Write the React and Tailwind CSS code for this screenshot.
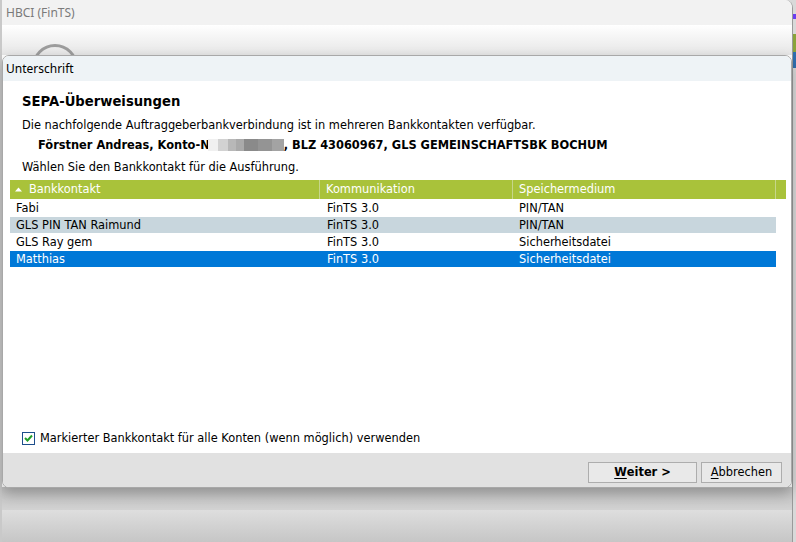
import React from "react";

const rows = [
  { name: "Fabi", komm: "FinTS 3.0", medium: "PIN/TAN", tone: "plain" },
  { name: "GLS PIN TAN Raimund", komm: "FinTS 3.0", medium: "PIN/TAN", tone: "alt" },
  { name: "GLS Ray gem", komm: "FinTS 3.0", medium: "Sicherheitsdatei", tone: "plain" },
  { name: "Matthias", komm: "FinTS 3.0", medium: "Sicherheitsdatei", tone: "selected" },
];

const rowTone = {
  plain: "bg-white text-black",
  alt: "bg-[#c8d6dd] text-black",
  selected: "bg-[#0078d7] text-white",
};

export default function App() {
  return (
    <div className="relative h-[542px] w-[796px] overflow-hidden bg-[#d9d9d9] font-['Noto_Sans',sans-serif]">
      {/* background window */}
      <div className="flex h-full w-[793px] flex-col overflow-hidden rounded-tr-[8px] border-l-2 border-r border-[#9a9a9a] border-l-[#c9c9c9] bg-white">
        <div className="flex h-[25px] items-center bg-[#f2f2f2] pl-[4px] text-[12px] text-[#7a7a7a]">
          HBCI (FinTS)
        </div>
        <div className="relative h-[30px] bg-gradient-to-b from-white to-[#e6e6e6]">
          <div className="absolute left-[30px] top-[19px] h-[46px] w-[46px] rounded-full border-[3px] border-[#9c9c9c]" />
        </div>
        <div className="flex-1 bg-white" />
        <div className="h-[23px] bg-gradient-to-b from-[#c2c2c2] to-[#d2d2d2]" />
        <div className="h-[32px] bg-gradient-to-b from-[#dedede] to-[#c6c6c6]" />
      </div>

      {/* right desktop strip accents */}
      <div className="absolute right-0 top-[14px] h-[5px] w-[3px] bg-[#6a3cf0]" />
      <div className="absolute right-0 top-[34px] h-[18px] w-[3px] bg-[#8aa33a]" />
      <div className="absolute right-0 top-[52px] h-[16px] w-[3px] bg-[#2f6fb0]" />

      {/* dialog */}
      <div className="absolute left-[2px] top-[55px] flex h-[433px] w-[790px] flex-col overflow-hidden rounded-[7px] border border-[#a8a8a8] bg-white shadow-[0_6px_14px_rgba(0,0,0,0.25)]">
        <div className="flex h-[25px] shrink-0 items-center bg-[#eef3f6] pl-[3px] text-[12px] text-black">
          Unterschrift
        </div>

        <div className="flex flex-1 flex-col font-['DejaVu_Sans',sans-serif] text-[11.4px] text-black">
          <div className="pl-[19px] pt-[13px] text-[13.2px] font-bold leading-[16px]">
            SEPA-Überweisungen
          </div>
          <div className="mt-[8px] pl-[19px] leading-[14px]">
            Die nachfolgende Auftraggeberbankverbindung ist in mehreren Bankkontakten verfügbar.
          </div>
          <div className="mt-[6px] flex items-center pl-[35px] font-bold leading-[14px]">
            <span>Förstner Andreas, Konto-N</span>
            <span className="ml-[-2px] flex h-[12px] w-[76px]">
              <span className="w-[10px] bg-[#f0f0f0]" />
              <span className="w-[10px] bg-[#d2d2d2]" />
              <span className="w-[8px] bg-[#b8b8b8]" />
              <span className="w-[8px] bg-[#aaaaaa]" />
              <span className="w-[14px] bg-[#8a8a8a]" />
              <span className="w-[14px] bg-[#949494]" />
              <span className="w-[12px] bg-[#a3a3a3]" />
            </span>
            <span>, BLZ 43060967, GLS GEMEINSCHAFTSBK BOCHUM</span>
          </div>
          <div className="mt-[8px] pl-[19px] leading-[14px]">
            Wählen Sie den Bankkontakt für die Ausführung.
          </div>

          <div className="ml-[7px] mr-[5px] mt-[6px]">
            <div className="flex h-[19px] items-center bg-[#a9c23a] text-white">
              <div className="flex h-full w-[310px] items-center border-r border-[#c6d68a] pl-[5px]">
                <svg width="7" height="5" viewBox="0 0 7 5" className="mr-[7px]">
                  <path d="M0 4.5 L3.5 0.5 L7 4.5 Z" fill="#ffffff" />
                </svg>
                Bankkontakt
              </div>
              <div className="flex h-full w-[193px] items-center border-r border-[#c6d68a] pl-[6px]">
                Kommunikation
              </div>
              <div className="flex h-full w-[263px] items-center border-r border-[#c6d68a] pl-[6px]">
                Speichermedium
              </div>
              <div className="h-full flex-1" />
            </div>
            {rows.map((r) => (
              <div
                key={r.name}
                className={`mt-px flex h-[16px] w-[766px] items-center leading-[16px] ${rowTone[r.tone]}`}
              >
                <div className="w-[310px] pl-[6px]">{r.name}</div>
                <div className="w-[193px] pl-[7px]">{r.komm}</div>
                <div className="flex-1 pl-[6px]">{r.medium}</div>
              </div>
            ))}
          </div>

          <div className="flex-1" />

          <div className="mb-[8px] flex items-center pl-[19px]">
            <div className="flex h-[13px] w-[13px] items-center justify-center border border-[#1e4f8c] bg-white">
              <svg width="9" height="8" viewBox="0 0 9 8">
                <path d="M1 4 L3.5 6.5 L8 1.5" fill="none" stroke="#22a02a" strokeWidth="2" />
              </svg>
            </div>
            <span className="ml-[5px] leading-[14px]">
              Markierter Bankkontakt für alle Konten (wenn möglich) verwenden
            </span>
          </div>
        </div>

        <div className="flex h-[34px] shrink-0 items-center justify-end gap-[4px] bg-[#e1e1e1] pr-[9px] pt-[5px] font-['DejaVu_Sans',sans-serif] text-[11.4px] text-black">
          <button className="flex h-[21px] w-[109px] items-center justify-center border border-[#adadad] bg-[#e9e9e9] font-bold">
            <span className="underline underline-offset-2">W</span>eiter &gt;
          </button>
          <button className="flex h-[21px] w-[81px] items-center justify-center border border-[#adadad] bg-[#e9e9e9]">
            <span className="underline underline-offset-2">A</span>bbrechen
          </button>
        </div>
      </div>
    </div>
  );
}
